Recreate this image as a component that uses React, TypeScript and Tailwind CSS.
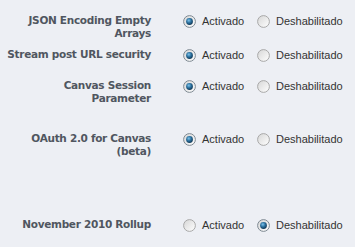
import React from "react";

function Radio({ checked }: { checked: boolean }) {
  return (
    <svg width="13" height="13" viewBox="0 0 13 13" className="shrink-0">
      <defs>
        <linearGradient id="rg" x1="0" y1="0" x2="1" y2="1">
          <stop offset="0" stopColor="#d6d6d6" />
          <stop offset="1" stopColor="#ffffff" />
        </linearGradient>
        <radialGradient id="dot" cx="0.4" cy="0.35" r="0.7">
          <stop offset="0" stopColor="#7cc3ec" />
          <stop offset="0.5" stopColor="#2b6f9c" />
          <stop offset="1" stopColor="#0d324f" />
        </radialGradient>
      </defs>
      <circle cx="6.5" cy="6.5" r="5.9" fill="url(#rg)" stroke={checked ? "#7f8a93" : "#a8a8a8"} strokeWidth="1" />
      {checked && <circle cx="6.5" cy="6.5" r="3.4" fill="url(#dot)" />}
    </svg>
  );
}

function Row({
  label,
  h,
  on,
}: {
  label: React.ReactNode;
  h: string;
  on: boolean;
}) {
  return (
    <div className={`flex items-start ${h}`}>
      <div className="w-[151px] shrink-0 text-right font-bold text-[10.5px] leading-[13px] tracking-[-0.3px] text-[#505660] whitespace-nowrap font-['DejaVu_Sans',sans-serif]">
        {label}
      </div>
      <div className="ml-[32px] mt-[1px] flex items-center text-[11px] leading-[13px] text-[#333333] font-['Liberation_Sans',Arial,sans-serif]">
        <div className="flex items-center w-[74px]">
          <Radio checked={on} />
          <span className="ml-[6px]">Activado</span>
        </div>
        <div className="flex items-center">
          <Radio checked={!on} />
          <span className="ml-[6px]">Deshabilitado</span>
        </div>
      </div>
    </div>
  );
}

export default function App() {
  return (
    <div className="w-[355px] h-[247px] bg-[#edeff4] pt-[14px] overflow-hidden">
      <Row
        h="h-[34px]"
        on
        label={
          <>
            JSON Encoding Empty
            <br />
            Arrays
          </>
        }
      />
      <Row h="h-[31px]" on label="Stream post URL security" />
      <Row
        h="h-[53px]"
        on
        label={
          <>
            Canvas Session
            <br />
            Parameter
          </>
        }
      />
      <Row
        h="h-[86px]"
        on
        label={
          <>
            OAuth 2.0 for Canvas
            <br />
            (beta)
          </>
        }
      />
      <Row h="h-[20px]" on={false} label="November 2010 Rollup" />
    </div>
  );
}
